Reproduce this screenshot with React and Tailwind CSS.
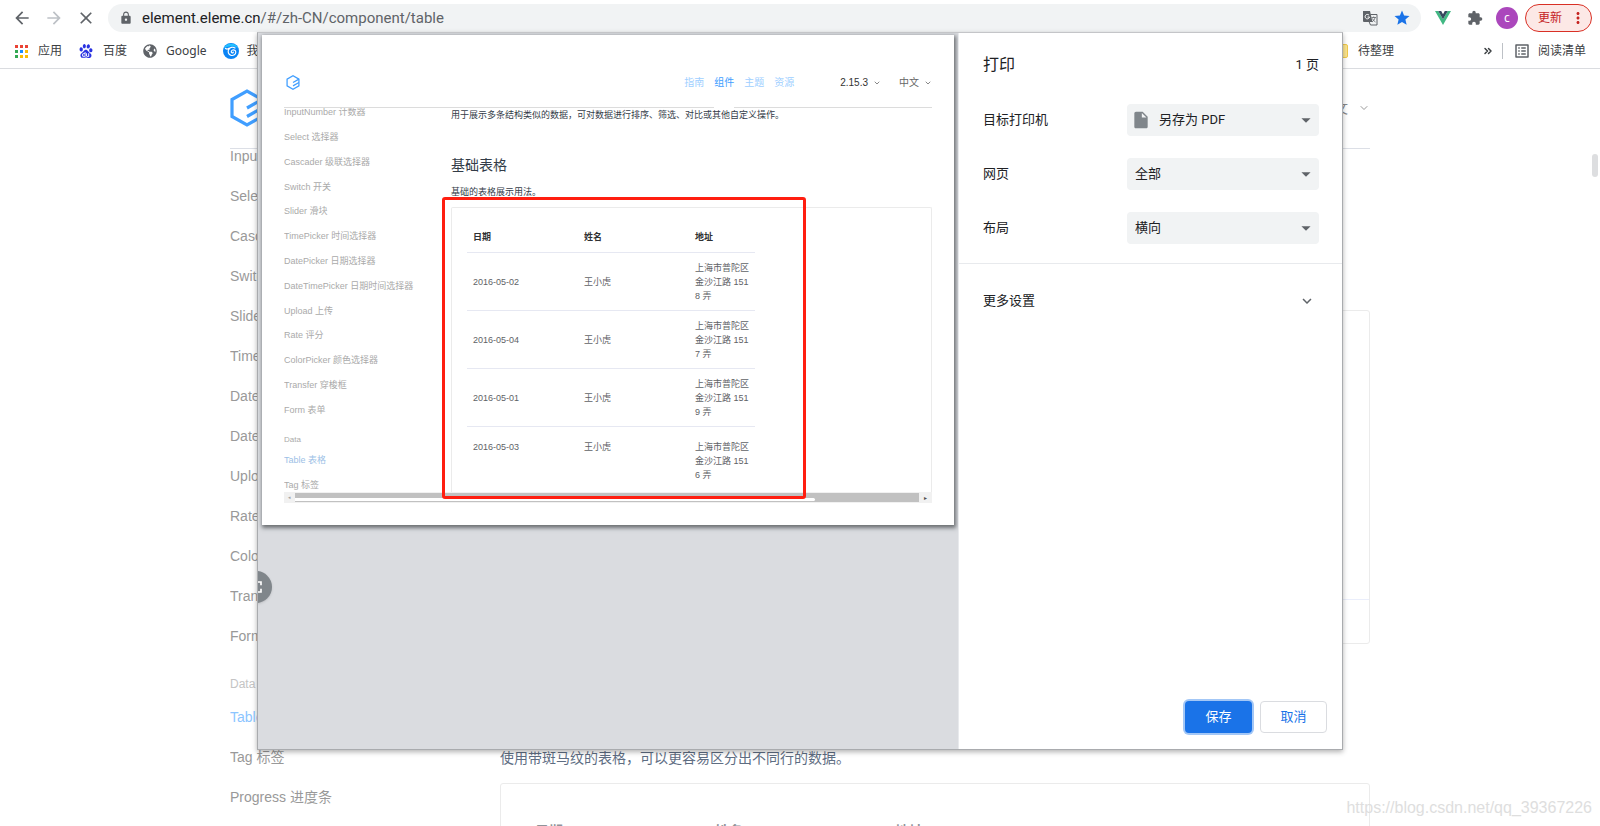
import React from "react";
import {
  MdArrowBack,
  MdArrowForward,
  MdClose,
  MdLock,
  MdStar,
  MdMoreVert,
  MdOutlineListAlt,
  MdInsertDriveFile,
  MdFullscreen,
  MdArrowDropDown,
  MdExpandMore,
} from "react-icons/md";
import { FaGlobeAmericas } from "react-icons/fa";
import { SiBaidu } from "react-icons/si";
import { ChevronDown, ChevronsRight } from "lucide-react";

const NAV_ITEMS = [
  "InputNumber 计数器",
  "Select 选择器",
  "Cascader 级联选择器",
  "Switch 开关",
  "Slider 滑块",
  "TimePicker 时间选择器",
  "DatePicker 日期选择器",
  "DateTimePicker 日期时间选择器",
  "Upload 上传",
  "Rate 评分",
  "ColorPicker 颜色选择器",
  "Transfer 穿梭框",
  "Form 表单",
];

const ROWS = [
  ["2016-05-02", "王小虎", "上海市普陀区金沙江路 1518 弄"],
  ["2016-05-04", "王小虎", "上海市普陀区金沙江路 1517 弄"],
  ["2016-05-01", "王小虎", "上海市普陀区金沙江路 1519 弄"],
  ["2016-05-03", "王小虎", "上海市普陀区金沙江路 1516 弄"],
];

function ElementLogo({ className }) {
  return (
    <svg viewBox="0 0 34 38" className={className} fill="none" stroke="#409eff" strokeWidth="3.2" aria-hidden="true">
      <path d="M32 10.500 17 2 2 10.500v17L17 36l15-8.500z" />
      <path d="M17 19 32 10.500M17 27.500 32 19" />
    </svg>
  );
}

function AppsIcon() {
  const colors = ["#ea4335", "#ea4335", "#ea4335", "#34a853", "#1a8cff", "#fbbc04", "#34a853", "#fbbc04", "#fbbc04"];
  return (
    <svg viewBox="0 0 13 13" className="size-[13px] shrink-0" aria-hidden="true">
      {colors.map((c, i) => (
        <rect key={i} x={(i % 3) * 5} y={Math.floor(i / 3) * 5} width="3" height="3" fill={c} />
      ))}
    </svg>
  );
}

function SwirlIcon() {
  return (
    <svg viewBox="0 0 16 16" className="size-4 shrink-0" aria-hidden="true">
      <circle cx="8" cy="8" r="8" fill="#0a84f5" />
      <path d="M0.500 6A8 8 0 0 1 15.500 6C12 2 4 3 .5 6z" fill="#21c0ff" />
      <path
        d="M2.500 5.500c1.300 1 2.600.6 3.500-.3M12 5c-2-1.300-4.800-.8-6.200 1.300-1.500 2.500-.3 5.500 2.300 6.100 2.500.5 4.600-1 4.700-3.100 0-1.700-1.600-2.700-3.100-2.300-1.500.4-1.900 2.200-.8 2.800.6.3 1.300 0 1.400-.6"
        fill="none"
        stroke="#fff"
        strokeWidth="1.200"
        strokeLinecap="round"
      />
    </svg>
  );
}

function VueIcon() {
  return (
    <svg viewBox="0 0 16 14" className="h-[14px] w-4" aria-hidden="true">
      <path d="M0 0h3.200L8 8.300 12.800 0H16L8 14z" fill="#41b883" />
      <path d="M3.200 0H6.200L8 3.200 9.800 0h3L8 8.300z" fill="#35495e" />
    </svg>
  );
}

function TranslateIcon() {
  return (
    <svg viewBox="0 0 15 15" className="size-[15px]" fill="none" aria-hidden="true">
      <path d="M7.500 3.500h6.500v10.500H7.500L6.200 11" stroke="#5f6368" />
      <path d="M8.500 6.500h4.500M10.700 5.500v1M12 6.500c-.3 1.800-1.500 3.500-3 4.500M9.500 7.500c.5 1.500 1.800 2.800 3 3.500" stroke="#5f6368" strokeWidth="0.800" />
      <path d="M0 0h7l2.500 11H1a1 1 0 0 1-1-1z" fill="#5f6368" />
      <path d="M6 4.200A2.200 2.200 0 1 0 6.500 6H4.500" stroke="#fff" strokeWidth="1" />
    </svg>
  );
}

function PuzzleIcon() {
  return (
    <svg viewBox="0 0 24 24" className="ml-4 size-4" fill="currentColor" aria-hidden="true">
      <path d="M20.500 11H19V7c0-1.100-.9-2-2-2h-4V3.500a2.500 2.500 0 0 0-5 0V5H4c-1.100 0-2 .9-2 2v3.800h1.500c1.500 0 2.700 1.200 2.700 2.700s-1.200 2.700-2.700 2.700H2V20c0 1.100.9 2 2 2h3.800v-1.500c0-1.500 1.200-2.700 2.700-2.700s2.700 1.200 2.700 2.700V22H17c1.100 0 2-.9 2-2v-4h1.500a2.500 2.500 0 0 0 0-5z" />
    </svg>
  );
}

function BrowserChrome() {
  return (
    <header className="shrink-0 border-b border-[#dadce0] bg-white font-['Noto_Sans','Noto_Sans_CJK_SC',sans-serif] text-[#5f6368]">
      <div className="flex h-9 items-center pr-2">
        <nav className="flex w-[108px] shrink-0 items-center gap-3 pl-3">
          <button type="button" aria-label="后退"><MdArrowBack className="size-5" /></button>
          <button type="button" aria-label="前进" className="text-[#bdc1c6]"><MdArrowForward className="size-5" /></button>
          <button type="button" aria-label="停止"><MdClose className="size-5" /></button>
        </nav>
        <div className="flex h-7 flex-1 items-center rounded-full bg-[#f1f3f4] pr-[10px] pl-[11px]">
          <MdLock className="size-[14px]" />
          <a href="#url" className="ml-[9px] flex-1 font-[Roboto,sans-serif] text-[15px]">
            <span className="text-[#202124]">element.eleme.cn</span>/#/zh-CN/component/table
          </a>
          <button type="button" aria-label="翻译"><TranslateIcon /></button>
          <button type="button" aria-label="收藏" className="ml-[15px] text-[#1a73e8]"><MdStar className="size-[18px]" /></button>
        </div>
        <div className="ml-[14px] flex shrink-0 items-center">
          <VueIcon />
          <PuzzleIcon />
          <span className="ml-[13px] flex size-[22px] items-center justify-center rounded-full bg-[#ab47bc] text-xs text-white">c</span>
          <button type="button" className="ml-[7px] flex h-7 w-[67px] items-center rounded-full border border-[#d93025] bg-[#fce8e6] pl-3 text-xs text-[#c5221f]">
            更新
            <MdMoreVert className="ml-[7px] size-[18px]" />
          </button>
        </div>
      </div>
      <div className="flex h-8 items-center pb-[6px] pt-1 pl-[15px] text-xs text-[#3c4043]">
        <a href="#apps" className="flex items-center gap-[10px]"><AppsIcon />应用</a>
        <a href="#baidu" className="ml-[17px] flex items-center gap-[10px]"><SiBaidu className="size-[14px] text-[#2932e1]" />百度</a>
        <a href="#google" className="ml-4 flex items-center gap-[9px]"><FaGlobeAmericas className="size-[14px] text-[#5f6368]" />Google</a>
        <a href="#mine" className="ml-4 flex items-center gap-2"><SwirlIcon />我的</a>
        <a href="#todo" className="ml-auto flex items-center gap-[10px]">
          <span className="h-[14px] w-4 rounded-xs border border-[#f0c94b] bg-[#fce58e]" />
          待整理
        </a>
        <button type="button" aria-label="更多书签" className="ml-[88px]"><ChevronsRight className="size-3" strokeWidth={3} /></button>
        <span className="ml-2 h-4 border-l border-[#bdc1c6]" />
        <a href="#reading" className="mr-[14px] ml-[10px] flex items-center gap-[7px]">
          <MdOutlineListAlt className="size-[18px] text-[#5f6368]" />
          阅读清单
        </a>
      </div>
    </header>
  );
}

function DocsPage() {
  return (
    <main className="flex min-h-0 flex-1 justify-center text-sm">
      <div className="flex w-[1140px] max-w-full flex-col">
        <div className="flex h-20 shrink-0 items-center justify-between border-b border-[#dcdfe6] pb-[2px]">
          <ElementLogo className="h-[38px] w-[34px]" />
          <button type="button" className="flex items-center gap-[10px] text-[#888]">
            中文
            <ChevronDown className="size-3 text-[#999]" strokeWidth={2} />
          </button>
        </div>
        <div className="flex min-h-0 flex-1 overflow-hidden">
          <nav className="-mt-[13px] w-[270px] shrink-0 text-[#999]">
            {NAV_ITEMS.map((item) => (
              <a key={item} href="#item" className="block h-10 leading-10">{item}</a>
            ))}
            <p className="mt-[15px] h-[26px] text-xs leading-[26px] text-[#c4c4c4]">Data</p>
            <a href="#table" className="block h-10 leading-10 text-[#8cc5ff]">Table 表格</a>
            <a href="#tag" className="block h-10 leading-10">Tag 标签</a>
            <a href="#progress" className="block h-10 leading-10">Progress 进度条</a>
          </nav>
          <div className="min-w-0 flex-1 pt-[161px]">
            <section className="flex h-[334px] flex-col justify-end rounded-[3px] border border-[#ebebeb]">
              <div className="h-[44px] border-t border-[#eaeefb]" />
            </section>
            <p className="mt-[103px] leading-[22px] text-[#5e6d82]">使用带斑马纹的表格，可以更容易区分出不同行的数据。</p>
            <section className="mt-[14px] h-40 rounded-[3px] border border-[#ebebeb] pt-[37px] pl-6 font-bold text-[#909399]">
              <div className="flex pl-[10px] leading-5">
                <span className="w-[180px]">日期</span>
                <span className="w-[180px]">姓名</span>
                <span>地址</span>
              </div>
            </section>
          </div>
        </div>
      </div>
    </main>
  );
}

function PreviewTable() {
  return (
    <table className="w-[288px] table-fixed border-collapse text-left text-[9px] leading-[14px] text-[#606266]">
      <colgroup>
        <col className="w-[111px]" />
        <col className="w-[111px]" />
        <col className="w-[66px]" />
      </colgroup>
      <thead>
        <tr className="h-[30px] border-b border-[#e6e8f2] text-[#303133]">
          <th className="pl-[6px]">日期</th>
          <th className="pl-[6px]">姓名</th>
          <th className="pl-[6px]">地址</th>
        </tr>
      </thead>
      <tbody>
        {ROWS.map((row, i) => {
          const last = i === ROWS.length - 1;
          return (
            <tr key={row[0]} className={last ? "align-top" : "border-b border-[#e6e8f2] align-middle"}>
              {row.map((cell) => (
                <td key={cell} className={last ? "pt-[13px] pr-1 pl-[6px] break-all" : "pt-2 pr-1 pb-[7px] pl-[6px] break-all"}>{cell}</td>
              ))}
            </tr>
          );
        })}
      </tbody>
    </table>
  );
}

function PreviewSheet() {
  return (
    <article className="relative flex h-[490px] flex-col bg-white px-[22px] shadow-[1px_2px_4px_1px_rgba(60,64,67,0.7)]">
      <div className="flex h-[73px] shrink-0 border-b border-[#dcdcdc] pt-[22px] text-[10px]">
        <a href="#home" aria-label="Element" className="flex h-[50px] items-center pl-[2px]"><ElementLogo className="h-[15px] w-[14px]" /></a>
        <nav className="ml-auto flex h-[51px] gap-[10px] leading-[51px] text-[#a0cfff]">
          <a href="#guide">指南</a>
          <a href="#component" className="border-b border-white text-[#409eff]">组件</a>
          <a href="#theme">主题</a>
          <a href="#resource">资源</a>
        </nav>
        <button type="button" className="ml-[46px] flex h-[51px] items-center gap-[5px] text-[#333]">
          2.15.3<ChevronDown className="size-2 text-[#888]" strokeWidth={3} />
        </button>
        <button type="button" className="ml-[18px] flex h-[51px] items-center gap-[5px] text-[#666]">
          中文<ChevronDown className="size-2 text-[#888]" strokeWidth={3} />
        </button>
      </div>
      <div className="flex h-[384px] shrink-0 overflow-hidden pt-px text-[9px]">
        <nav className="-mt-[9px] w-[167px] shrink-0 text-[#aaa]">
          <div className="flex h-[322px] flex-col">
            {NAV_ITEMS.map((item) => (
              <a key={item} href="#item" className="flex flex-1 items-center leading-3">{item}</a>
            ))}
          </div>
          <p className="mt-[9px] text-[8px] leading-[17px]">Data</p>
          <a href="#table" className="block leading-[25px] text-[#9dbfe6]">Table 表格</a>
          <a href="#tag" className="block leading-[25px]">Tag 标签</a>
        </nav>
        <div className="flex min-w-0 flex-1 flex-col text-[#333c48]">
          <p className="leading-3">用于展示多条结构类似的数据，可对数据进行排序、筛选、对比或其他自定义操作。</p>
          <h3 className="mt-[34px] text-sm leading-5">基础表格</h3>
          <p className="mt-[11px] leading-3">基础的表格展示用法。</p>
          <section className="mt-[9px] min-h-0 flex-1 rounded-t-[2px] border border-b-0 border-[#ebebeb] pt-[14px] pl-[15px]">
            <PreviewTable />
          </section>
        </div>
      </div>
      <div className="flex h-[11px] shrink-0 items-center bg-[#f1f1f1]">
        <span className="w-[11px] text-center text-[5px] leading-none text-[#a3a3a3]">◂</span>
        <div className="flex h-[9px] flex-1 items-end bg-[#c1c1c1] pb-px">
          <div className="h-[3px] w-5/6 rounded-r-full bg-white" />
        </div>
        <span className="w-[13px] text-center text-[6px] leading-none text-[#505050]">▸</span>
      </div>
      <div className="pointer-events-none absolute top-[162px] left-[180px] h-[302px] w-[364px] rounded-[3px] border-3 border-[#ff1e10]" />
    </article>
  );
}

function SettingRow({ id, label, value, icon }) {
  return (
    <div className="flex h-[54px] items-center justify-between">
      <label htmlFor={id}>{label}</label>
      <div className="relative flex w-48 items-center">
        <select
          id={id}
          defaultValue={value}
          className={
            icon
              ? "h-8 w-full appearance-none rounded-sm bg-[#f1f3f4] pr-8 pl-8 outline-none"
              : "h-8 w-full appearance-none rounded-sm bg-[#f1f3f4] pr-8 pl-2 outline-none"
          }
        >
          <option>{value}</option>
        </select>
        {icon && <MdInsertDriveFile className="pointer-events-none absolute left-1 size-5 text-[#80868b]" />}
        <MdArrowDropDown className="pointer-events-none absolute right-[2px] size-[22px] text-[#5f6368]" />
      </div>
    </div>
  );
}

function PrintDialog() {
  return (
    <div
      role="dialog"
      aria-label="打印"
      className="absolute top-8 bottom-[76px] left-1/2 flex w-[1086px] max-w-full -translate-x-1/2 border border-[#a9abae] border-t-[#c4c5c8] bg-white shadow-[0_2px_5px_rgba(0,0,0,0.3)]"
    >
      <div className="relative min-w-0 flex-1 overflow-hidden bg-[#dadce0] px-1 pt-[2px]">
        <PreviewSheet />
        <button
          type="button"
          aria-label="缩放"
          className="absolute bottom-[146px] -left-[18px] flex size-8 items-center justify-center rounded-full bg-[#80868b] text-white shadow"
        >
          <MdFullscreen className="size-5" />
        </button>
      </div>
      <aside className="flex w-[384px] shrink-0 flex-col border-l border-[#e8eaed] font-[Roboto,'Noto_Sans_CJK_SC',sans-serif] text-[13px] text-[#202124]">
        <div className="flex h-[60px] items-center justify-between pt-1 pr-[23px] pl-6">
          <h1 className="text-base">打印</h1>
          <span>1 页</span>
        </div>
        <div className="border-b border-[#e8eaed] pr-[23px] pb-2 pl-6">
          <SettingRow id="printer" label="目标打印机" value="另存为 PDF" icon />
          <SettingRow id="pages" label="网页" value="全部" />
          <SettingRow id="layout" label="布局" value="横向" />
        </div>
        <button type="button" className="flex h-[74px] items-center justify-between pr-[26px] pl-6">
          更多设置
          <MdExpandMore className="size-[18px] text-[#5f6368]" />
        </button>
        <div className="mt-auto flex justify-end gap-2 p-4 pr-[15px]">
          <button type="button" className="h-8 w-[67px] rounded-sm bg-[#1a73e8] text-white ring-2 ring-[#a3c7f6]">保存</button>
          <button type="button" className="h-8 w-[67px] rounded-sm border border-[#dadce0] text-[#1a73e8]">取消</button>
        </div>
      </aside>
    </div>
  );
}

export default function App() {
  return (
    <div className="relative flex h-screen flex-col overflow-hidden bg-white font-['Liberation_Sans','Noto_Sans_CJK_SC',sans-serif]">
      <BrowserChrome />
      <DocsPage />
      <div className="absolute top-[154px] right-[2px] h-[23px] w-[6px] rounded-full bg-[#dddee0]" />
      <PrintDialog />
      <p className="absolute right-2 bottom-[6px] text-base text-[#dedede]">https://blog.csdn.net/qq_39367226</p>
    </div>
  );
}
